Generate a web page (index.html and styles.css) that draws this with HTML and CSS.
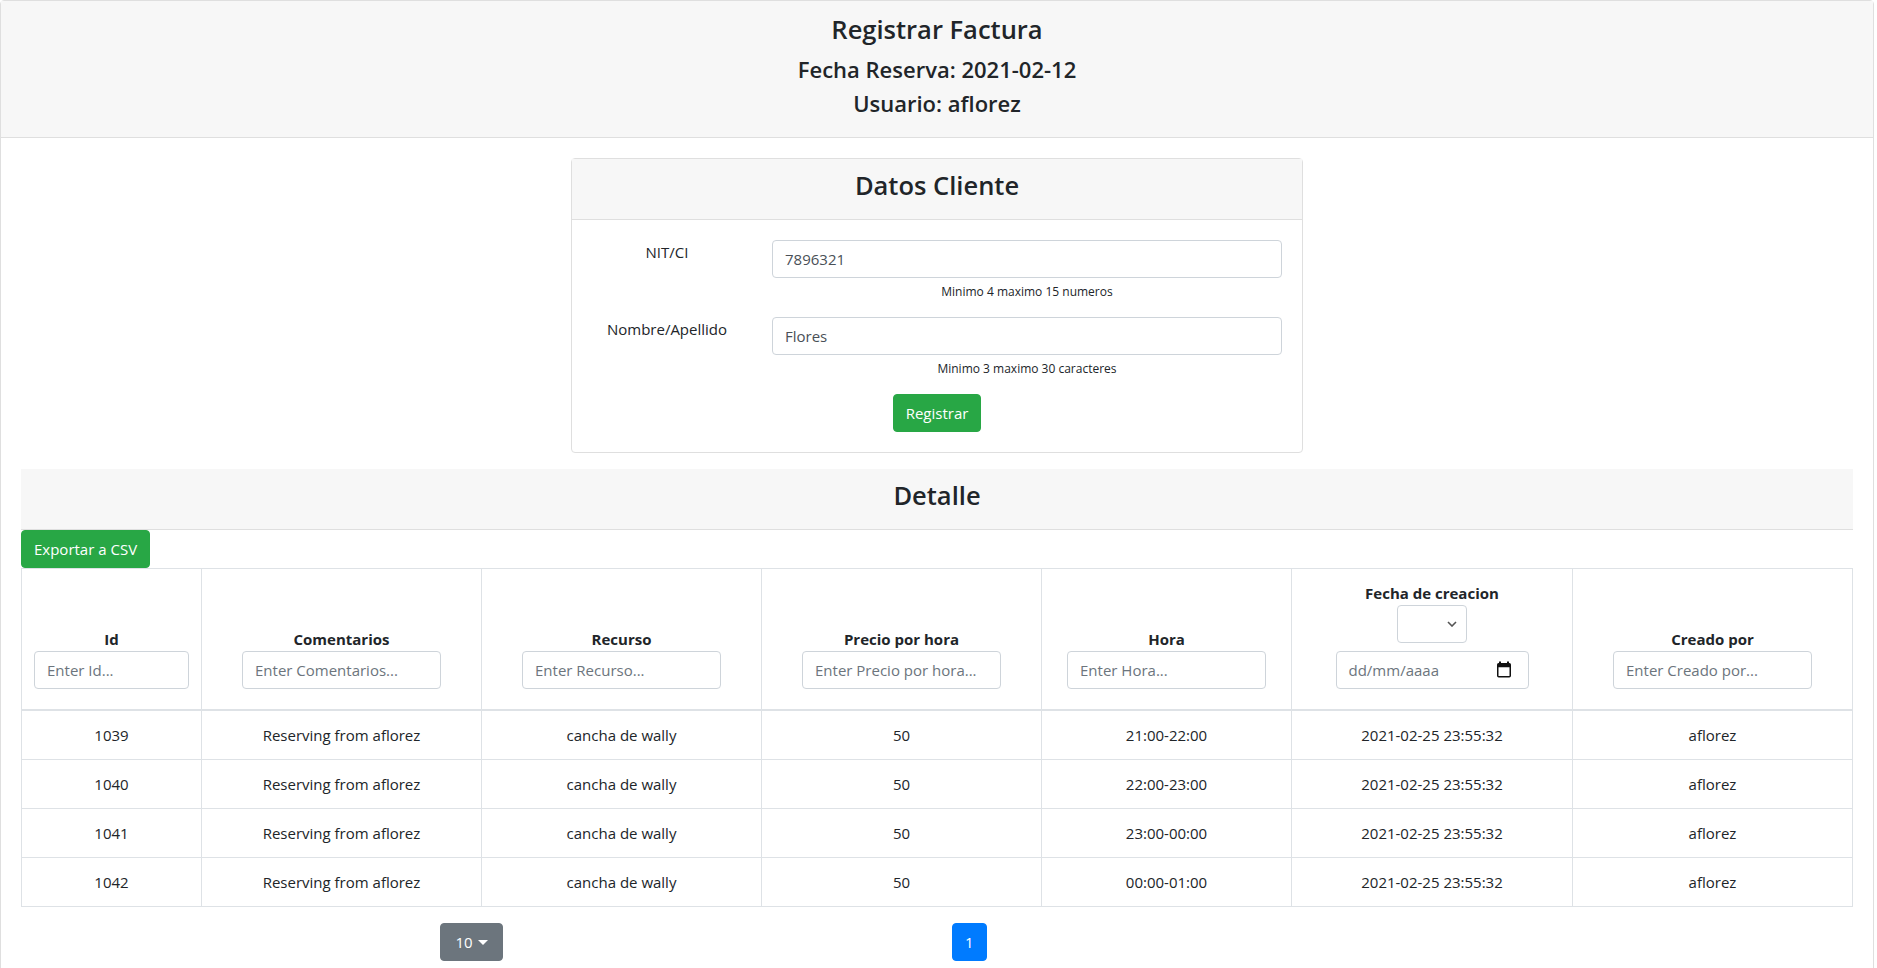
FILE: index.html
```html
<!DOCTYPE html>
<html lang="es">
<head>
<meta charset="utf-8">
<title>Registrar Factura</title>
<link rel="stylesheet" href="styles.css">
</head>
<body>
<div class="page-card">
  <div class="page-header">
    <h3 class="page-title">Registrar Factura</h3>
    <h4 class="page-subtitle">Fecha Reserva: 2021-02-12</h4>
    <h4 class="page-subtitle">Usuario: aflorez</h4>
  </div>
  <div class="page-body">
    <div class="client-card">
      <div class="client-header"><h3 class="section-title">Datos Cliente</h3></div>
      <div class="client-body">
        <div class="form-group">
          <label class="form-label">NIT/CI</label>
          <div class="form-field">
            <input class="form-control" type="text" value="7896321">
            <small class="help-text">Minimo 4 maximo 15 numeros</small>
          </div>
        </div>
        <div class="form-group">
          <label class="form-label">Nombre/Apellido</label>
          <div class="form-field">
            <input class="form-control" type="text" value="Flores">
            <small class="help-text">Minimo 3 maximo 30 caracteres</small>
          </div>
        </div>
        <div class="form-actions">
          <button class="btn btn-success" type="button">Registrar</button>
        </div>
      </div>
    </div>

    <div class="section-header"><h3 class="section-title">Detalle</h3></div>
    <button class="btn btn-success" type="button">Exportar a CSV</button>

    <table class="data-table">
      <colgroup>
        <col class="col-id">
        <col class="col-wide">
        <col class="col-wide">
        <col class="col-wide">
        <col class="col-hora">
        <col class="col-fecha">
        <col class="col-wide">
      </colgroup>
      <thead>
        <tr>
          <th><span>Id</span><div class="filter"><input class="form-control filter-input" type="text" placeholder="Enter Id..."></div></th>
          <th><span>Comentarios</span><div class="filter"><input class="form-control filter-input" type="text" placeholder="Enter Comentarios..."></div></th>
          <th><span>Recurso</span><div class="filter"><input class="form-control filter-input" type="text" placeholder="Enter Recurso..."></div></th>
          <th><span>Precio por hora</span><div class="filter"><input class="form-control filter-input" type="text" placeholder="Enter Precio por hora..."></div></th>
          <th><span>Hora</span><div class="filter"><input class="form-control filter-input" type="text" placeholder="Enter Hora..."></div></th>
          <th>
            <span>Fecha de creacion</span>
            <div class="filter">
              <div class="form-control fake-select">
                <svg class="chevron" width="10" height="6" viewBox="0 0 10 6"><polyline points="1,1 5,5 9,1" fill="none" stroke="#555" stroke-width="1.6"/></svg>
              </div>
            </div>
            <div class="filter">
              <div class="form-control fake-date">
                <span class="date-placeholder">dd/mm/aaaa</span>
                <svg class="cal-icon" width="16" height="17" viewBox="0 0 16 17"><rect x="3" y="0.5" width="2" height="3" fill="#111"/><rect x="11" y="0.5" width="2" height="3" fill="#111"/><rect x="1.75" y="2.75" width="12.5" height="13" rx="1" fill="none" stroke="#111" stroke-width="1.5"/><rect x="1.75" y="2.75" width="12.5" height="3.5" fill="#111"/></svg>
              </div>
            </div>
          </th>
          <th><span>Creado por</span><div class="filter"><input class="form-control filter-input" type="text" placeholder="Enter Creado por..."></div></th>
        </tr>
      </thead>
      <tbody>
        <tr><td>1039</td><td>Reserving from aflorez</td><td>cancha de wally</td><td>50</td><td>21:00-22:00</td><td>2021-02-25 23:55:32</td><td>aflorez</td></tr>
        <tr><td>1040</td><td>Reserving from aflorez</td><td>cancha de wally</td><td>50</td><td>22:00-23:00</td><td>2021-02-25 23:55:32</td><td>aflorez</td></tr>
        <tr><td>1041</td><td>Reserving from aflorez</td><td>cancha de wally</td><td>50</td><td>23:00-00:00</td><td>2021-02-25 23:55:32</td><td>aflorez</td></tr>
        <tr><td>1042</td><td>Reserving from aflorez</td><td>cancha de wally</td><td>50</td><td>00:00-01:00</td><td>2021-02-25 23:55:32</td><td>aflorez</td></tr>
      </tbody>
    </table>

    <div class="pager">
      <div class="pager-size">
        <button class="btn btn-secondary" type="button">10<span class="caret"></span></button>
      </div>
      <ul class="pager-pages">
        <li><a class="page-link active" href="#">1</a></li>
      </ul>
    </div>
  </div>
</div>
</body>
</html>
```

FILE: styles.css
```css
* { box-sizing: border-box; }

html, body {
  margin: 0;
  padding: 0;
}

body {
  font-family: "Open Sans", "Liberation Sans", sans-serif;
  font-size: 15px;
  line-height: 24px;
  color: #212529;
  background: #fff;
}

.page-card {
  margin-right: 3px;
  border: 1px solid #dfdfdf;
  border-radius: 4px;
  background: #fff;
}

.page-header {
  background: #f7f7f7;
  border-bottom: 1px solid #dfdfdf;
  padding: 12px 20px 13px;
  text-align: center;
}

.page-title {
  margin: 0 0 8px;
  font-size: 25.5px;
  line-height: 33.6px;
  font-weight: 600;
}

.page-subtitle {
  margin: 0 0 6px;
  font-size: 22px;
  line-height: 28.8px;
  font-weight: 600;
}

.page-body {
  padding: 20px;
}

.client-card {
  width: 732px;
  margin: 0 auto 16px;
  border: 1px solid #dfdfdf;
  border-radius: 4px;
}

.client-header,
.section-header {
  background: #f7f7f7;
  border-bottom: 1px solid #dfdfdf;
  padding: 10px 20px 16px;
  text-align: center;
}

.section-title {
  margin: 0;
  font-size: 25.5px;
  line-height: 33.6px;
  font-weight: 600;
}

.client-body {
  padding: 20px;
}

.form-group {
  display: grid;
  grid-template-columns: 150px 1fr;
  column-gap: 30px;
  margin-bottom: 16px;
}

.form-label {
  text-align: center;
  line-height: 24px;
}

.form-field {
  display: flex;
  flex-direction: column;
}

.form-control {
  display: block;
  width: 100%;
  height: 38px;
  padding: 6px 12px;
  font-family: inherit;
  font-size: 15px;
  line-height: 24px;
  color: #495057;
  background: #fff;
  border: 1px solid #ced4da;
  border-radius: 4px;
  outline: none;
}

.form-control::placeholder {
  color: #6c757d;
  opacity: 1;
}

.help-text {
  display: block;
  margin-top: 4px;
  font-size: 12px;
  line-height: 19.2px;
  text-align: center;
  color: #212529;
}

.form-actions {
  display: flex;
  justify-content: center;
}

.btn {
  display: inline-block;
  padding: 6px 12px;
  font-family: inherit;
  font-size: 15px;
  line-height: 24px;
  font-weight: 400;
  border: 1px solid transparent;
  border-radius: 4px;
  color: #fff;
  cursor: pointer;
}

.btn-success {
  background: #28a745;
  border-color: #28a745;
}

.btn-secondary {
  background: #6c757d;
  border-color: #6c757d;
  padding: 6px 14px;
}

.caret {
  display: inline-block;
  margin-left: 5px;
  vertical-align: 3px;
  border-top: 5px solid #fff;
  border-left: 5px solid transparent;
  border-right: 5px solid transparent;
}

/* table */
.data-table {
  width: 100%;
  table-layout: fixed;
  border-collapse: collapse;
  border: 1px solid #dee2e6;
  margin-bottom: 16px;
}

.col-id { width: 180px; }
.col-wide { width: 280px; }
.col-hora { width: 250px; }
.col-fecha { width: 281px; }

.data-table th,
.data-table td {
  border: 1px solid #dee2e6;
  padding: 12px;
  text-align: center;
  line-height: 24px;
}

.data-table th {
  vertical-align: bottom;
  border-bottom-width: 2px;
  font-weight: 700;
}

.data-table th > span {
  display: block;
}

.data-table td {
  vertical-align: top;
  font-weight: 400;
}

.filter {
  display: flex;
  justify-content: center;
  margin-bottom: 8px;
}

.filter-input {
  width: 199px;
  max-width: 100%;
  font-weight: 400;
}

.fake-select {
  width: 70px;
  position: relative;
}

.chevron {
  position: absolute;
  right: 9px;
  top: 15px;
}

.fake-date {
  width: 193px;
  display: flex;
  align-items: center;
  justify-content: space-between;
  font-weight: 400;
  padding-right: 16px;
}

.date-placeholder {
  color: #6c757d;
}

.cal-icon {
  display: block;
}

/* pagination */
.pager {
  display: grid;
  grid-template-columns: 1fr 1fr;
  column-gap: 30px;
}

.pager-size {
  text-align: center;
}

.pager-pages {
  display: flex;
  margin: 0;
  padding: 0;
  list-style: none;
}

.page-link {
  display: block;
  padding: 8px 12px;
  line-height: 20px;
  font-size: 15px;
  text-decoration: none;
  border: 1px solid #007bff;
  border-radius: 4px;
  color: #fff;
  background: #007bff;
}
```
